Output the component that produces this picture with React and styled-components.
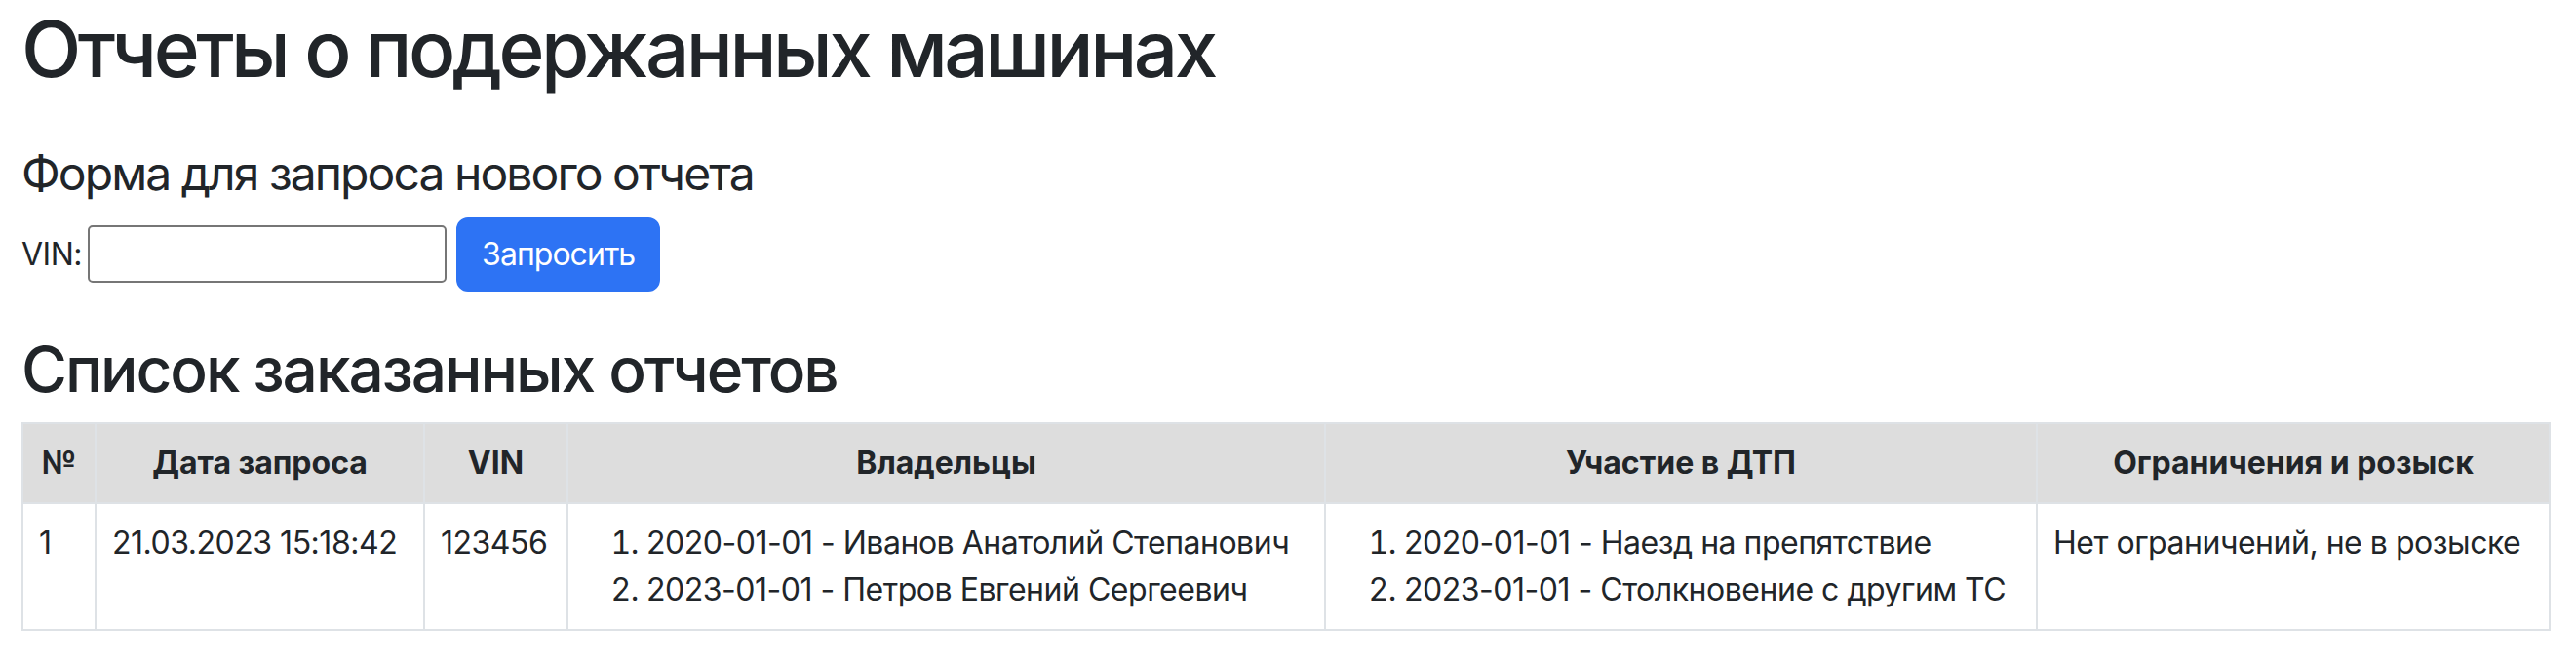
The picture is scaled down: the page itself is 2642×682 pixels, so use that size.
import React from 'react'
import styled, { createGlobalStyle } from 'styled-components'

const GlobalStyle = createGlobalStyle`
  *, *::before, *::after { box-sizing: border-box; }
  body {
    margin: 0;
    background: #fff;
    color: #212529;
    font-family: Inter, "Noto Sans", sans-serif;
    font-size: 32px;
    line-height: 1.5;
    letter-spacing: -0.015em;
  }
`

const Page = styled.div`
  padding: 0 24px 0 22px;
`

const Title = styled.h1`
  font-size: 80px;
  font-weight: 500;
  line-height: 1.2;
  letter-spacing: -0.044em;
  margin: 2px 0 16px;
`

const SubTitle = styled.h4`
  font-size: 48px;
  font-weight: 400;
  line-height: 1.2;
  letter-spacing: -0.04em;
  margin: 51px 0 16px;
`

const SectionTitle = styled.h2`
  font-size: 64px;
  font-weight: 500;
  line-height: 1.2;
  letter-spacing: -0.032em;
  margin: 0 0 16px;
`

const RequestForm = styled.form`
  display: flex;
  align-items: center;
  margin-bottom: 42px;
`

const Label = styled.label`
  margin-right: 6px;
`

const VinInput = styled.input`
  width: 368px;
  height: 59px;
  border: 2px solid #767676;
  border-radius: 5px;
  font: inherit;
  padding: 2px 4px;
`

const Button = styled.button`
  margin-left: 10px;
  padding: 12px 24px;
  border: 2px solid #2d73f4;
  border-radius: 12px;
  background: #2d73f4;
  color: #fff;
  font: inherit;
  line-height: 1.5;
  letter-spacing: -0.03em;
  cursor: pointer;
`

const Table = styled.table`
  width: 2592px;
  table-layout: fixed;
  border-collapse: collapse;
  vertical-align: top;
  border: 2px solid #dee2e6;
`

const Th = styled.th`
  background: #dddddd;
  font-weight: 700;
  letter-spacing: 0;
  text-align: center;
  padding: 16px;
  border: 2px solid #dee2e6;
`

const Td = styled.td`
  padding: 16px;
  border: 2px solid #dee2e6;
  vertical-align: top;
  white-space: nowrap;
`

const List = styled.ol`
  margin: 0;
  padding-left: 64px;
`

const columns = [
  ['№', 75],
  ['Дата запроса', 337],
  ['VIN', 147],
  ['Владельцы', 777],
  ['Участие в ДТП', 730],
  ['Ограничения и розыск', 526],
]

const reports = [
  {
    id: 1,
    date: '21.03.2023 15:18:42',
    vin: '123456',
    owners: [
      '2020-01-01 - Иванов Анатолий Степанович',
      '2023-01-01 - Петров Евгений Сергеевич',
    ],
    accidents: [
      '2020-01-01 - Наезд на препятствие',
      '2023-01-01 - Столкновение с другим ТС',
    ],
    restrictions: 'Нет ограничений, не в розыске',
  },
]

export default function App() {
  return (
    <Page>
      <GlobalStyle />
      <Title>Отчеты о подержанных машинах</Title>
      <SubTitle>Форма для запроса нового отчета</SubTitle>
      <RequestForm onSubmit={e => e.preventDefault()}>
        <Label htmlFor="vin">VIN:</Label>
        <VinInput id="vin" type="text" />
        <Button type="submit">Запросить</Button>
      </RequestForm>
      <SectionTitle>Список заказанных отчетов</SectionTitle>
      <Table>
        <colgroup>
          {columns.map(([name, w]) => <col key={name} style={{ width: w }} />)}
        </colgroup>
        <thead>
          <tr>
            {columns.map(([name]) => <Th key={name}>{name}</Th>)}
          </tr>
        </thead>
        <tbody>
          {reports.map(r => (
            <tr key={r.id}>
              <Td>{r.id}</Td>
              <Td>{r.date}</Td>
              <Td>{r.vin}</Td>
              <Td>
                <List>{r.owners.map(o => <li key={o}>{o}</li>)}</List>
              </Td>
              <Td>
                <List>{r.accidents.map(a => <li key={a}>{a}</li>)}</List>
              </Td>
              <Td>{r.restrictions}</Td>
            </tr>
          ))}
        </tbody>
      </Table>
    </Page>
  )
}
